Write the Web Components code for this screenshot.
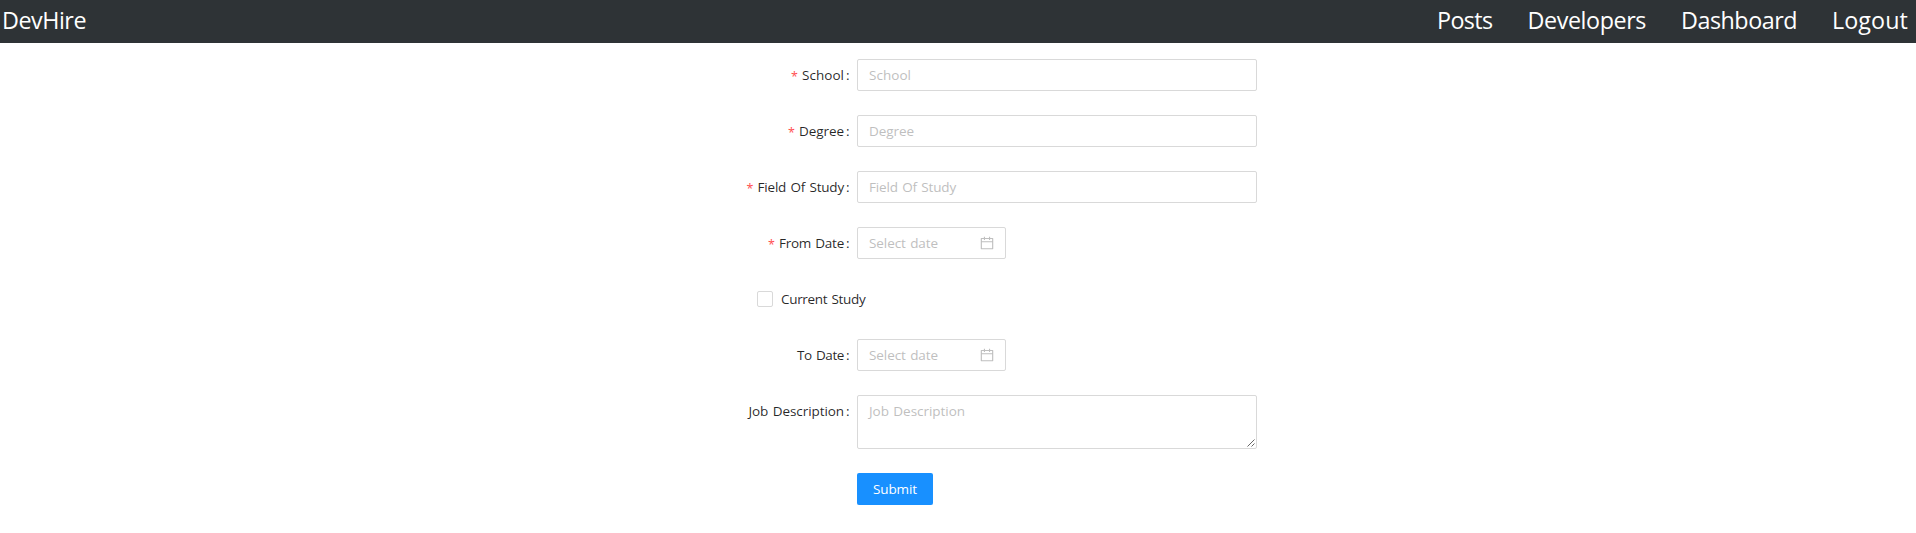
<!DOCTYPE html>
<html lang="en">
<head>
<meta charset="utf-8">
<title>DevHire</title>
<style>
body{margin:0;background:#fff;font:13.5px/22px "Open Sans","Noto Sans",sans-serif;color:rgba(0,0,0,.85)}
</style>
</head>
<body>
<dev-header></dev-header>
<dev-form>
<form-row label="School" label-width="42" required><text-field><fit-text width="42">School</fit-text></text-field></form-row>
<form-row label="Degree" label-width="45" required><text-field><fit-text width="45">Degree</fit-text></text-field></form-row>
<form-row label="Field Of Study" label-width="86.5" required><text-field><fit-text width="87">Field Of Study</fit-text></text-field></form-row>
<form-row label="From Date" label-width="65" required><date-field></date-field></form-row>
<check-row><fit-text width="84.5">Current Study</fit-text></check-row>
<form-row label="To Date" label-width="47"><date-field></date-field></form-row>
<form-row label="Job Description" label-width="95.5"><text-field multiline><fit-text width="96">Job Description</fit-text></text-field></form-row>
<form-row><submit-button><fit-text width="44">Submit</fit-text></submit-button></form-row>
</dev-form>
<script>
class Base extends HTMLElement{
  connectedCallback(){
    if(this.shadowRoot)return;
    this.attachShadow({mode:'open'}).innerHTML=this.render();
    this.ready?.();
  }
}
// Text set to a given advance width by adjusting its tracking.
class FitText extends Base{
  render(){return `<style>:host{display:inline-block;white-space:nowrap}span{display:inline-block;word-spacing:1px}</style><span><slot></slot></span>`}
  ready(){
    const s=this.shadowRoot.querySelector('span'),w=+this.getAttribute('width');
    const n=this.textContent.length;
    s.style.letterSpacing=(w-s.getBoundingClientRect().width)/n+'px';
    this.style.width=w+'px';
  }
}
class DevHeader extends Base{
  render(){return `<style>
:host{display:flex;justify-content:space-between;height:43px;box-sizing:border-box;padding:0 8px 0 2px;background:#2e3336;color:#fff;font-size:23.3px;line-height:40px}
nav{display:flex;gap:35px}
</style><fit-text width="84">DevHire</fit-text><nav><fit-text width="55.5">Posts</fit-text><fit-text width="118.5">Developers</fit-text><fit-text width="116">Dashboard</fit-text><fit-text width="76">Logout</fit-text></nav>`}
}
class DevForm extends Base{
  render(){return `<style>:host{display:flex;flex-direction:column;gap:24px;width:600px;margin:16px 0 0 657px}</style><slot></slot>`}
}
class FormRow extends Base{
  render(){
    const l=this.getAttribute('label');
    return `<style>
:host{display:grid;grid-template-columns:200px 400px;align-items:start}
.label{display:flex;justify-content:flex-end;height:32px;line-height:32px}
.req{color:#ff4d4f;margin-right:4px;width:7px;font-size:12.5px;line-height:35px;text-align:center}
.colon{width:3px;margin:0 8px 0 2px}
</style><div class="label">${this.hasAttribute('required')?'<span class="req">*</span>':''}${l?`<fit-text width="${this.getAttribute('label-width')}">${l}</fit-text><span class="colon">:</span>`:''}</div><div><slot></slot></div>`}
}
class TextField extends Base{
  render(){return `<style>
:host{display:block;position:relative;box-sizing:border-box;height:32px;border:1px solid #d9d9d9;border-radius:2px;padding:4px 11px;color:#bfbfbf;background:#fff}
:host([multiline]){height:54px}
svg{position:absolute;right:1px;bottom:1px}
</style><slot></slot>${this.hasAttribute('multiline')?'<svg width="8" height="8" viewBox="0 0 8 8" fill="none" stroke="#555" stroke-width=".9"><path d="M.5 7.5l7-7M4.5 7.5l3-3"/></svg>':''}`}
}
class DateField extends Base{
  render(){return `<style>
:host{display:flex;align-items:center;justify-content:space-between;box-sizing:border-box;width:149px;height:32px;border:1px solid #d9d9d9;border-radius:2px;padding:4px 11px;color:#bfbfbf}
svg{display:block}
</style><fit-text width="69">Select date</fit-text><svg width="14" height="14" viewBox="64 64 896 896" fill="currentColor"><path d="M880 184H712v-64c0-4.4-3.6-8-8-8h-56c-4.4 0-8 3.6-8 8v64H384v-64c0-4.4-3.6-8-8-8h-56c-4.4 0-8 3.6-8 8v64H144c-17.7 0-32 14.3-32 32v664c0 17.7 14.3 32 32 32h736c17.7 0 32-14.3 32-32V216c0-17.7-14.3-32-32-32zm-40 656H184V460h656v380zM184 392V256h128v48c0 4.4 3.6 8 8 8h56c4.4 0 8-3.6 8-8v-48h256v48c0 4.4 3.6 8 8 8h56c4.4 0 8-3.6 8-8v-48h128v136H184z"/></svg>`}
}
class CheckRow extends Base{
  render(){return `<style>
:host{display:flex;align-items:center;gap:8px;height:32px;padding-left:100px}
i{box-sizing:border-box;width:16px;height:16px;border:1px solid #d9d9d9;border-radius:2px}
</style><i></i><slot></slot>`}
}
class SubmitButton extends Base{
  render(){return `<style>
:host{display:flex;align-items:center;justify-content:center;width:76px;height:32px;border-radius:2px;background:#1890ff;color:#fff;box-shadow:0 2px 0 rgba(0,0,0,.045)}
</style><slot></slot>`}
}
customElements.define('fit-text',FitText);
customElements.define('dev-header',DevHeader);
customElements.define('dev-form',DevForm);
customElements.define('text-field',TextField);
customElements.define('date-field',DateField);
customElements.define('check-row',CheckRow);
customElements.define('submit-button',SubmitButton);
customElements.define('form-row',FormRow);
</script>
</body>
</html>
